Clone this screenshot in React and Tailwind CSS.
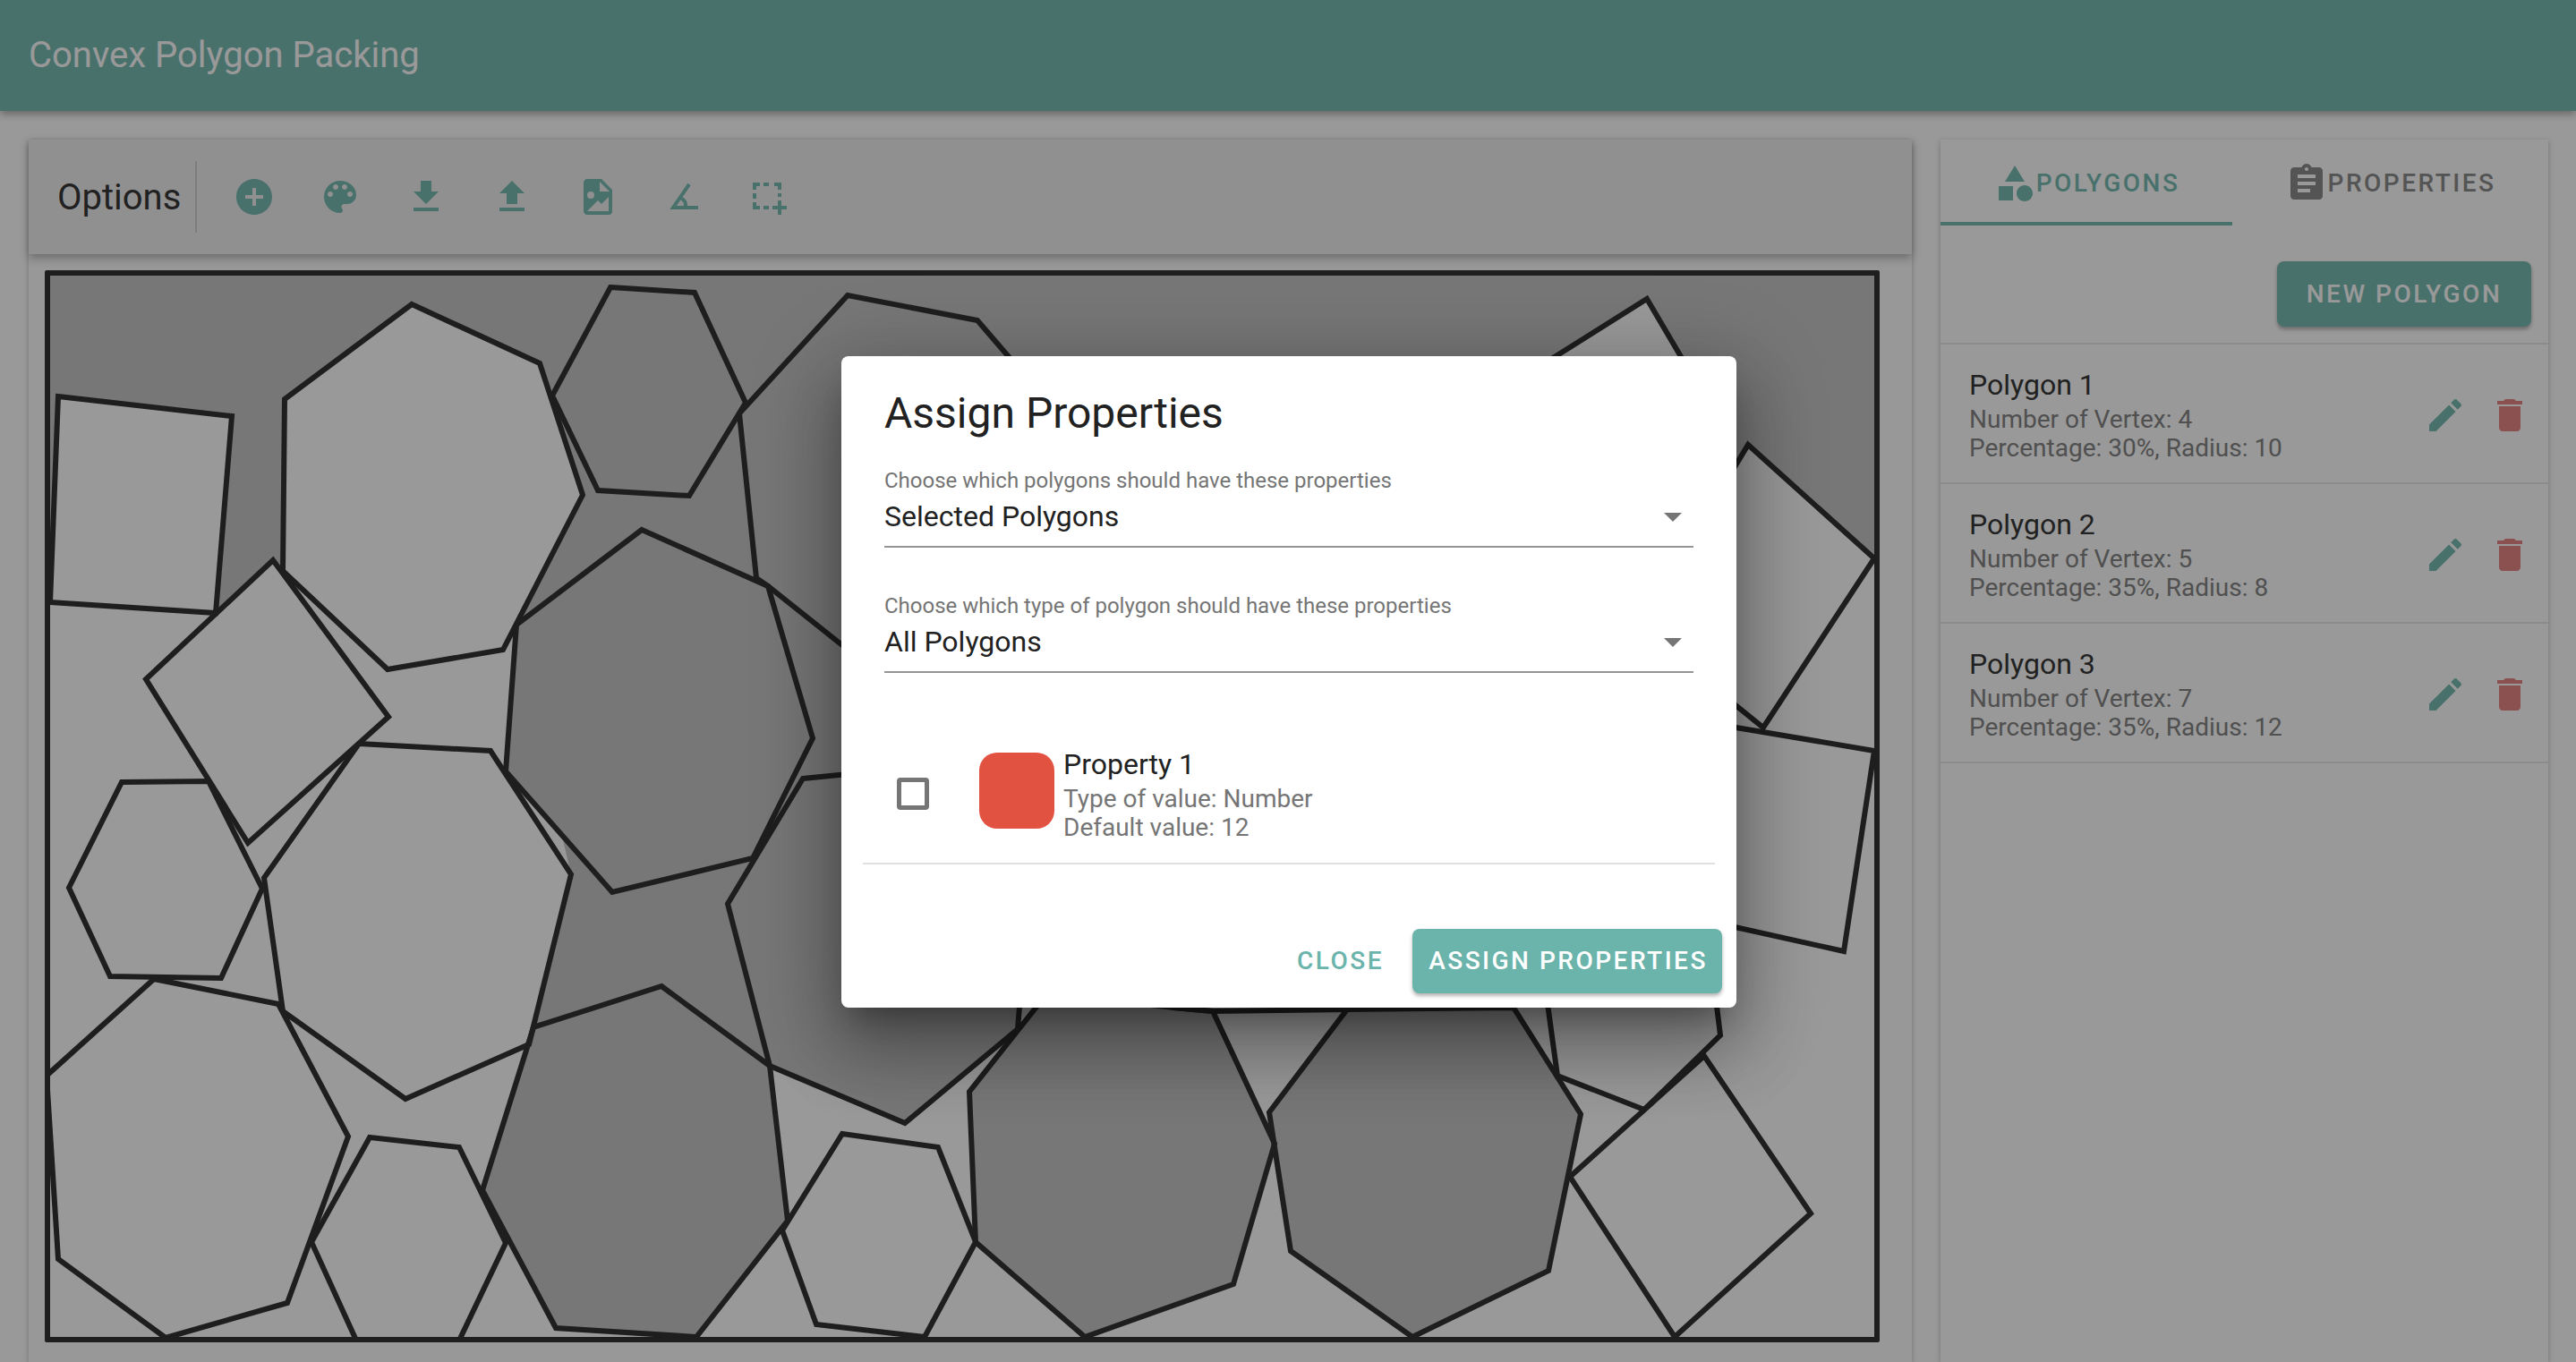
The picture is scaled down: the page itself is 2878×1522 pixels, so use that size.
import React from "react"

const lightBefore = [
  "1300,1000 1311,1126 1355,1130 1505,1128 1600,1000",
  "1840,334 1900,436 1800,600 1700,422",
  "1953,497 2094,624 1970,813 1830,700",
  "1880,803 2094,839 2060,1063 1880,1023",
  "1726,1100 1915,1100 1922,1157 1837,1240 1740,1202",
  "941,1267 1048,1282 1090,1388 1033,1494 912,1480 874,1375",
  "1754,1315 1904,1180 2023,1356 1871,1494",
  "65,443 259,465 241,685 56,673",
  "460,340 603,406 651,553 562,726 433,748 316,638 318,446",
  "136,874 233,873 293,993 247,1093 123,1091 77,992",
  "401,831 548,839 638,977 591,1167 453,1228 316,1130 295,981",
  "172,1094 311,1122 389,1270 321,1456 185,1495 65,1407 52,1202",
  "413,1271 513,1282 565,1389 512,1500 399,1500 348,1388",
  "305,626 434,801 277,942 163,759",
]

const darkPolys = [
  "682,321 776,327 833,450 770,554 668,548 617,442",
  "826,462 947,330 1092,358 1300,600 1100,850 941,721 858,655 845,646",
  "897,870 1100,850 1141,1100 1137,1150 1011,1255 860,1191 813,1010",
  "717,592 858,655 908,825 841,959 684,997 565,862 577,698",
  "739,1102 860,1191 880,1364 778,1494 621,1484 539,1330 596,1148",
  "1170,1110 1311,1126 1355,1130 1424,1278 1378,1435 1212,1494 1090,1388 1083,1220",
  "1505,1128 1691,1126 1766,1245 1730,1420 1578,1494 1442,1398 1418,1243",
]

const background =
  "50,302 2100,302 2100,625 1500,900 1100,1000 813,1010 860,1191 739,1102 591,1167 638,977 620,900 565,862 577,698 316,638 305,626 241,685 50,673"

const toolIcons = [
  "M12 2C6.48 2 2 6.48 2 12s4.48 10 10 10 10-4.48 10-10S17.52 2 12 2zm5 11h-4v4h-2v-4H7v-2h4V7h2v4h4v2z",
  "M12 3c-4.97 0-9 4.03-9 9s4.03 9 9 9c.83 0 1.5-.67 1.5-1.5 0-.39-.15-.74-.39-1.01-.23-.26-.38-.61-.38-.99 0-.83.67-1.5 1.5-1.5H16c2.76 0 5-2.24 5-5 0-4.42-4.03-8-9-8zm-5.5 9c-.83 0-1.5-.67-1.5-1.5S5.67 9 6.5 9 8 9.67 8 10.5 7.33 12 6.5 12zm3-4C8.67 8 8 7.33 8 6.5S8.67 5 9.5 5s1.5.67 1.5 1.5S10.33 8 9.5 8zm5 0c-.83 0-1.5-.67-1.5-1.5S13.67 5 14.5 5s1.5.67 1.5 1.5S15.33 8 14.5 8zm3 4c-.83 0-1.5-.67-1.5-1.5S16.67 9 17.5 9s1.5.67 1.5 1.5-.67 1.5-1.5 1.5z",
  "M19 9h-4V3H9v6H5l7 7 7-7zM5 18v2h14v-2H5z",
  "M9 16h6v-6h4l-7-7-7 7h4zm-4 2h14v2H5z",
  "M13,9H18.5L13,3.5V9M6,2H14L20,8V20A2,2 0 0,1 18,22H6C4.89,22 4,21.1 4,20V4C4,2.89 4.89,2 6,2M6,20H15L18,20V12L14,16L12,14L6,20M8,9A2,2 0 0,0 6,11A2,2 0 0,0 8,13A2,2 0 0,0 10,11A2,2 0 0,0 8,9Z",
  "M20,19H4.09L14.18,4.43L15.82,5.57L11.28,12.13C12.89,12.96 14,14.62 14,16.54C14,16.7 14,16.85 13.97,17H20V19M7.91,17H11.96C12,16.85 12,16.7 12,16.54C12,15.28 11.24,14.22 10.14,13.78L7.91,17Z",
  "M2.5 4h4v2h-2v2h-2zM8.5 4h3v2h-3zM14.5 4h4v4h-2V6h-2zM2.5 10h2v3h-2zM16.5 10h2v2h-2zM2.5 15h2v2h2v2h-4zM8.5 17h3v2h-3zM16.5 14h2v3h3v2h-3v3h-2v-3h-3v-2h3z",
]

const polygons = [
  { name: "Polygon 1", vertex: 4, pct: 30, radius: 10 },
  { name: "Polygon 2", vertex: 5, pct: 35, radius: 8 },
  { name: "Polygon 3", vertex: 7, pct: 35, radius: 12 },
]

const Icon = ({ d, className }) => (
  <svg viewBox="0 0 24 24" className={className} fill="currentColor">
    <path d={d} />
  </svg>
)

const SelectField = ({ label, value, className }) => (
  <div className={className}>
    <div className="text-[24px] leading-[28px] text-[#757575]">{label}</div>
    <div className="h-[61px] border-b-2 border-[#949494] pt-[6px]">
      <div className="flex h-[40px] items-center justify-between pr-[13px] text-[32px] leading-[40px] text-[#212121]">
        <span>{value}</span>
        <svg viewBox="0 0 20 10" className="mt-[2px] h-[10px] w-[20px]" fill="#757575">
          <path d="M0 0h20L10 10z" />
        </svg>
      </div>
    </div>
  </div>
)

const Canvas = () => (
  <div className="ml-[18px] mt-[18px] h-[1198px] w-[2050px] rounded-[2px] border-[6px] border-[#333]">
    <svg viewBox="56 308 2038 1186" className="block h-[1186px] w-[2038px] bg-white">
      <polygon points={background} fill="#c6c6c6" />
      {lightBefore.map((p) => (
        <polygon key={p} points={p} fill="#fff" />
      ))}
      {darkPolys.map((p) => (
        <polygon key={p} points={p} fill="#c6c6c6" />
      ))}
      {[...lightBefore, ...darkPolys].map((p) => (
        <polygon key={p} points={p} fill="none" stroke="#333" strokeWidth="6" />
      ))}
    </svg>
  </div>
)

const App = () => {
  return (
    <div className="relative flex h-[1522px] w-[2878px] flex-col overflow-hidden bg-white font-['Roboto',sans-serif]">
      <header className="z-10 flex h-[124px] shrink-0 items-center bg-[#7bbcb4] pl-[32px] text-[40px] text-white shadow-[0_4px_8px_rgba(0,0,0,0.3)]">
        Convex Polygon Packing
      </header>

      <div className="flex min-h-0 flex-1 gap-[32px] pl-[32px] pt-[32px]">
        <main className="w-[2104px] shrink-0 bg-[#fdfdfd] shadow-[0_2px_6px_rgba(0,0,0,0.25)]">
          <div className="flex h-[128px] items-center bg-[#f0f0f0] shadow-[0_4px_10px_rgba(0,0,0,0.3)]">
            <span className="pl-[32px] pr-[16px] pt-[2px] text-[40px] text-[#383838]">Options</span>
            <div className="mr-[16px] h-[80px] w-[2px] bg-[#d0d0d0]" />
            {toolIcons.map((d) => (
              <div key={d} className="flex h-[96px] w-[96px] items-center justify-center text-[#7bbcb4]">
                <Icon d={d} className="h-[48px] w-[48px]" />
              </div>
            ))}
          </div>
          <Canvas />
        </main>

        <aside className="w-[679px] shrink-0 bg-white shadow-[0_2px_6px_rgba(0,0,0,0.25)]">
          <div className="flex h-[96px] text-[28px] font-medium tracking-[2.5px]">
            <div className="flex w-[326px] items-center justify-center border-b-4 border-[#7bbcb4] pt-[6px] text-[#7bbcb4]">
              <Icon
                d="M11,13.5V21.5H3V13.5H11M12,2L17.5,11H6.5L12,2M17.5,13C20,13 22,15 22,17.5C22,20 20,22 17.5,22C15,22 13,20 13,17.5C13,15 15,13 17.5,13Z"
                className="h-[48px] w-[48px]"
              />
              POLYGONS
            </div>
            <div className="flex w-[353px] items-center justify-center pb-[4px] pt-[6px] text-[#8c8c8c]">
              <Icon
                d="M19 3h-4.18C14.4 1.84 13.3 1 12 1c-1.3 0-2.4.84-2.82 2H5c-1.1 0-2 .9-2 2v14c0 1.1.9 2 2 2h14c1.1 0 2-.9 2-2V5c0-1.1-.9-2-2-2zm-7 0c.55 0 1 .45 1 1s-.45 1-1 1-1-.45-1-1 .45-1 1-1zm2 14H7v-2h7v2zm3-4H7v-2h10v2zm0-4H7V7h10v2z"
                className="h-[48px] w-[48px]"
              />
              PROPERTIES
            </div>
          </div>

          <div className="flex h-[133px] items-start justify-end border-b-2 border-[#e8e8e8] pr-[19px] pt-[40px]">
            <button className="flex h-[73px] w-[284px] items-center justify-center rounded-[8px] bg-[#7bbcb4] text-[28px] font-medium tracking-[2.5px] text-white shadow-[0_3px_4px_rgba(0,0,0,0.3)]">
              NEW POLYGON
            </button>
          </div>

          {polygons.map((p) => (
            <div
              key={p.name}
              className="flex h-[156px] items-center justify-between border-b-2 border-[#e8e8e8] pl-[32px] pr-[19px]"
            >
              <div>
                <div className="text-[32px] leading-[46px] text-[#383838]">{p.name}</div>
                <div className="text-[28px] leading-[32px] text-[#858585]">Number of Vertex: {p.vertex}</div>
                <div className="text-[28px] leading-[32px] text-[#858585]">
                  Percentage: {p.pct}%, Radius: {p.radius}
                </div>
              </div>
              <div className="mt-[4px] flex gap-[24px]">
                <Icon
                  d="M3 17.25V21h3.75L17.81 9.94l-3.75-3.75L3 17.25zM20.71 7.04c.39-.39.39-1.02 0-1.41l-2.34-2.34c-.39-.39-1.02-.39-1.41 0l-1.83 1.83 3.75 3.75 1.83-1.83z"
                  className="h-[48px] w-[48px] text-[#7bbcb4]"
                />
                <Icon
                  d="M6 19c0 1.1.9 2 2 2h8c1.1 0 2-.9 2-2V7H6v12zM19 4h-3.5l-1-1h-5l-1 1H5v2h14V4z"
                  className="h-[48px] w-[48px] text-[#e88585]"
                />
              </div>
            </div>
          ))}
        </aside>
      </div>

      {/* backdrop and dialog */}
      <div className="absolute inset-0 z-20 flex items-center justify-center bg-black/40 pl-[2px] pt-[1px]">
        <div className="h-[728px] w-[1000px] rounded-[8px] bg-white shadow-[0_22px_30px_-14px_rgba(0,0,0,0.3),0_48px_76px_6px_rgba(0,0,0,0.22),0_18px_92px_16px_rgba(0,0,0,0.2)]">
          <div className="px-[48px] pt-[32px] text-[48px] leading-[64px] text-[#212121]">Assign Properties</div>
          <SelectField
            className="ml-[48px] mr-[48px] mt-[29px]"
            label="Choose which polygons should have these properties"
            value="Selected Polygons"
          />
          <SelectField
            className="ml-[48px] mr-[48px] mt-[51px]"
            label="Choose which type of polygon should have these properties"
            value="All Polygons"
          />

          <div className="ml-[24px] mr-[24px] mt-[48px] flex h-[166px] items-center border-b-2 border-[#e0e0e0] pl-[38px]">
            <div className="mt-[11px] h-[36px] w-[36px] rounded-[4px] border-[5px] border-[#757575]" />
            <div className="ml-[56px] mt-[3px] h-[85px] w-[84px] rounded-[20px] bg-[#e25241]" />
            <div className="ml-[10px] pt-[9px]">
              <div className="text-[32px] leading-[46px] text-[#212121]">Property 1</div>
              <div className="text-[28px] leading-[32px] text-[#757575]">Type of value: Number</div>
              <div className="text-[28px] leading-[32px] text-[#757575]">Default value: 12</div>
            </div>
          </div>

          <div className="mr-[16px] mt-[72px] flex items-center justify-end text-[28px] font-medium tracking-[2.5px]">
            <span className="mr-[32px] pt-[1px] text-[#6ab4ac]">CLOSE</span>
            <button className="flex h-[72px] w-[346px] items-center justify-center rounded-[8px] bg-[#6ab4ac] pl-[2px] pt-[1px] text-white shadow-[0_3px_4px_rgba(0,0,0,0.3)]">
              ASSIGN PROPERTIES
            </button>
          </div>
        </div>
      </div>
    </div>
  )
}

export default App
